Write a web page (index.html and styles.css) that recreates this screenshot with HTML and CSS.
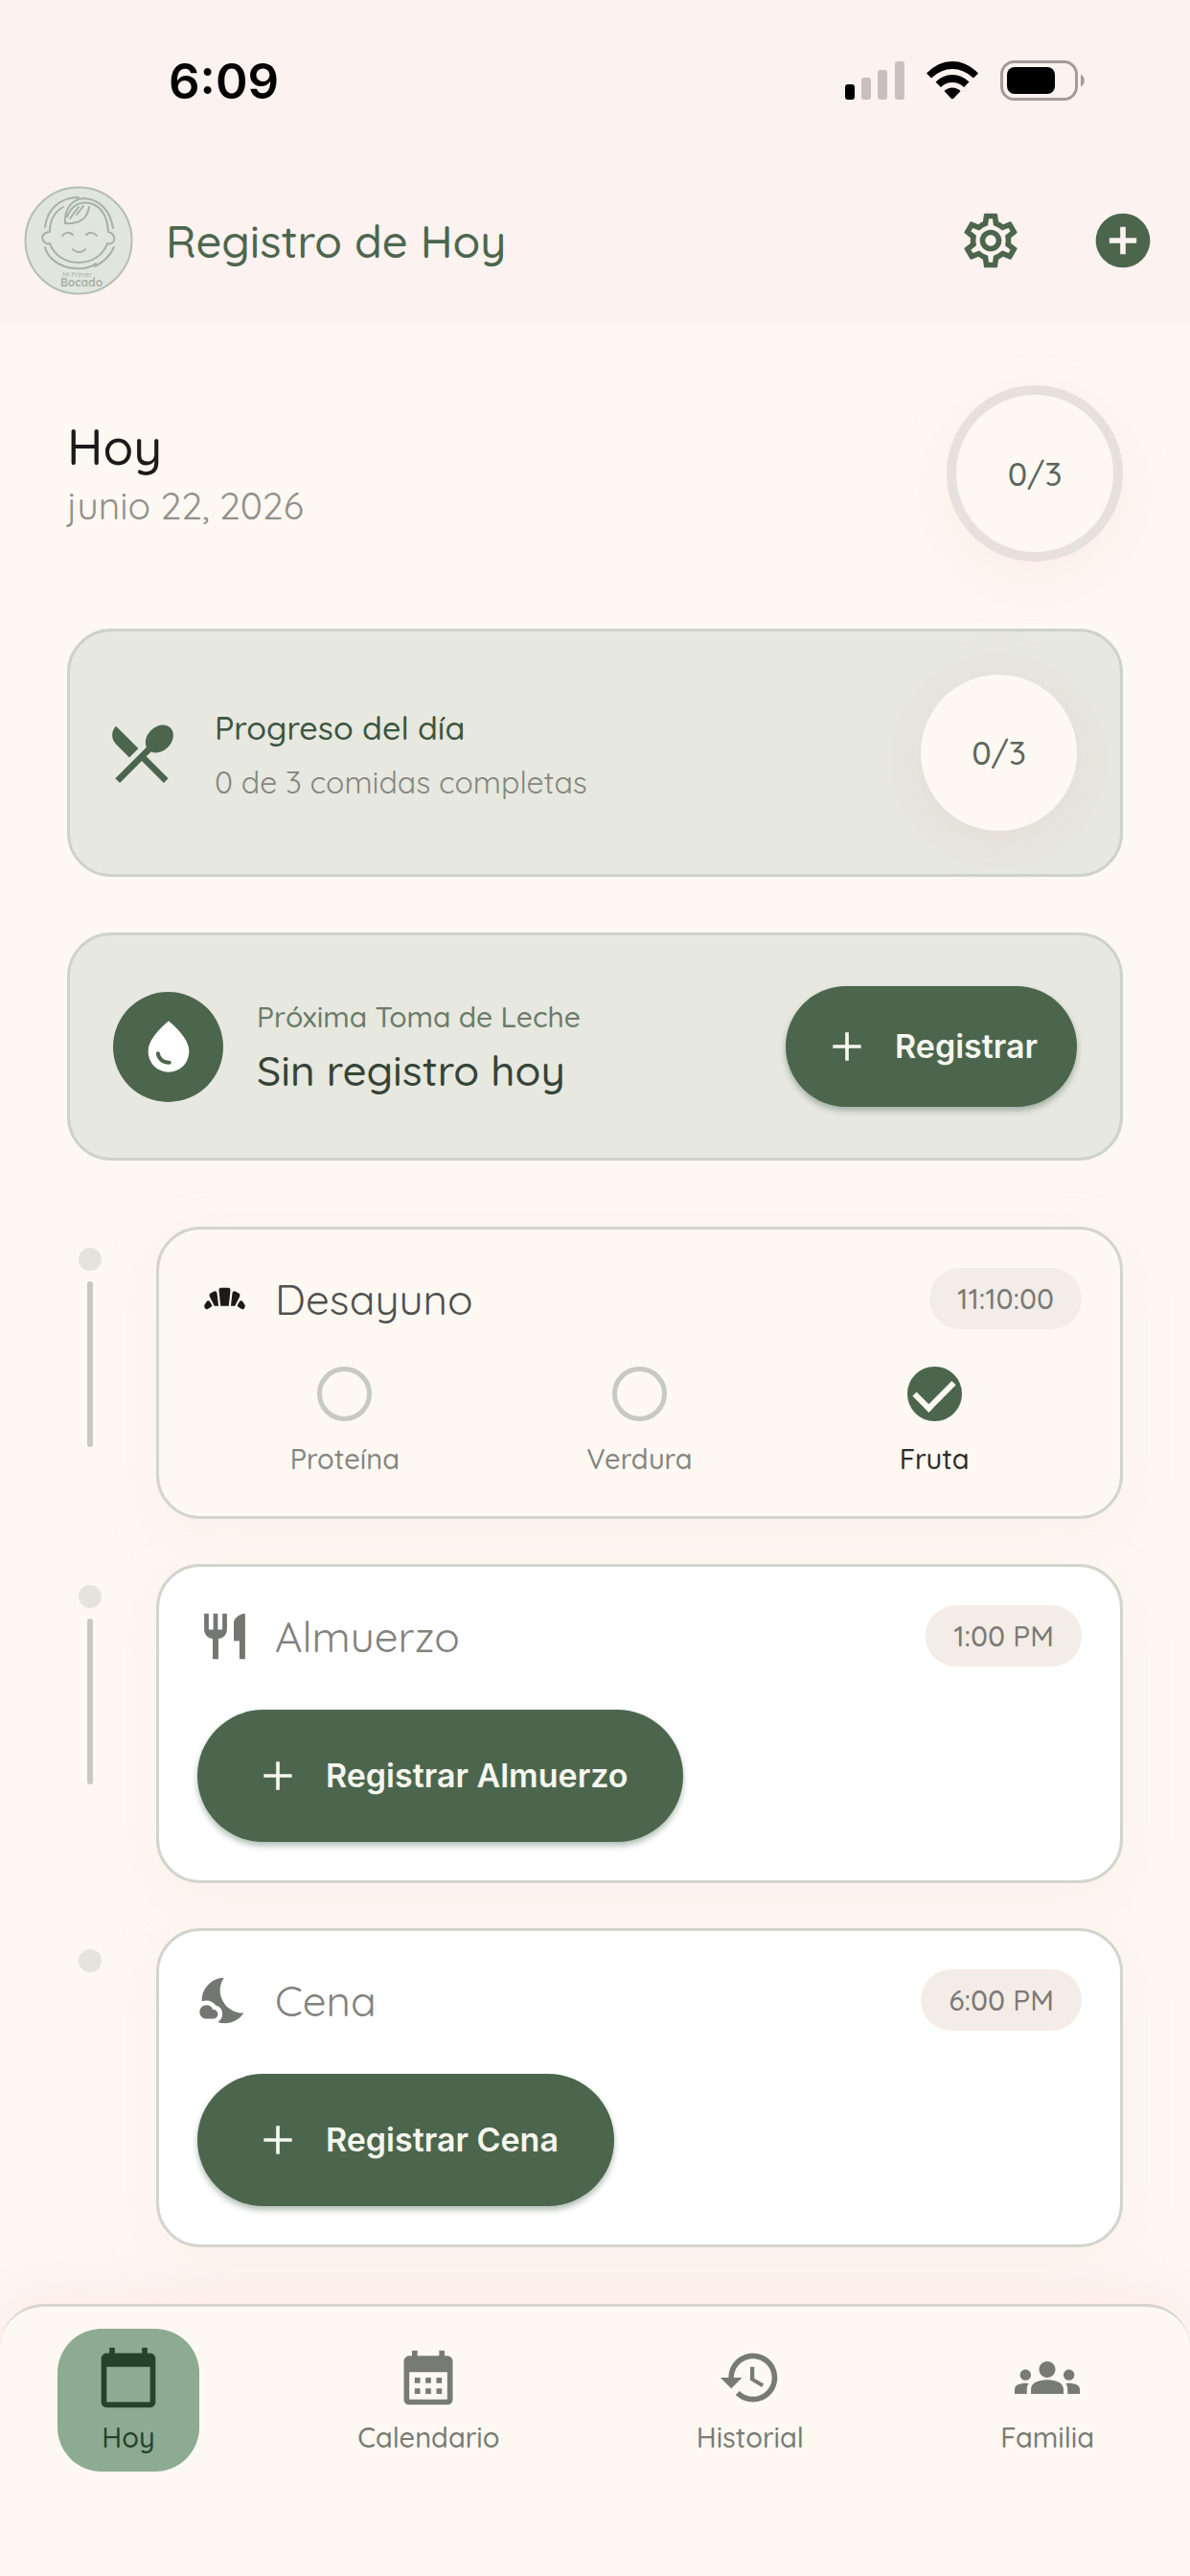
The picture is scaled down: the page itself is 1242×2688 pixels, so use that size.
FILE: index.html
```html
<!DOCTYPE html>
<html lang="es">
<head>
    <meta charset="UTF-8">
    <meta name="viewport" content="width=device-width, initial-scale=1.0">
    <title>Registro de Hoy</title>
    <link rel="stylesheet" href="styles.css">
</head>
<body>
    <header class="top">
        <div class="status-bar">
            <span class="clock">6:09</span>
            <div class="status-icons">
                <svg class="signal" viewBox="0 0 62 40">
                    <rect x="0" y="24" width="10" height="16" rx="3" fill="#000"/>
                    <rect x="17" y="17" width="10" height="23" rx="3" fill="#c9bfbe"/>
                    <rect x="34" y="9" width="10" height="31" rx="3" fill="#c9bfbe"/>
                    <rect x="52" y="0" width="10" height="40" rx="3" fill="#c9bfbe"/>
                </svg>
                <svg class="wifi" viewBox="0 0 54 40">
                    <path d="M0 12.500Q12 0 27 0T54 12.500L49 17.500Q39 8 27 8T5 17.500z"/>
                    <path d="M9.500 21.500Q17 14 27 14T44.500 21.500L39 27Q34 22 27 22T15 27z"/>
                    <path d="M18.500 31Q22 27.500 27 27.500T35.500 31L28.500 38.500Q27 40 25.500 38.500z"/>
                </svg>
                <svg class="battery" viewBox="0 0 90 42">
                    <rect x="1.500" y="1.500" width="78" height="39" rx="13" fill="none" stroke="#a39a99" stroke-width="3"/>
                    <rect x="7" y="7" width="50" height="28" rx="8"/>
                    <path d="M84 14.500a7.500 7.500 0 0 1 0 13z" fill="#a39a99"/>
                </svg>
            </div>
        </div>

        <div class="app-bar">
            <svg class="logo" viewBox="0 0 114 114">
                <circle cx="57" cy="57" r="55.500" fill="#e1e6dd" stroke="#b4beb3" stroke-width="2"/>
                <g fill="none" stroke="#a5b1a6" stroke-width="2" stroke-linecap="round">
                    <path d="M26 48c-6 1-8 5-6 9 2 3 4 4 7 3 4 12 16 20 30 20s26-8 30-20c3 1 6 0 7-3 1-4-1-8-6-9"/>
                    <path d="M22 43c2-18 15-31 35-31M27 48c0-13 5-21 14-26M43 39c-1-14 6-24 18-26 18 0 29 13 32 31M45 32c5-12 13-16 24-14 11 3 18 13 19 30"/>
                    <path d="M43 39c12 1 23-3 25-17M48 34l9-12M55 30l7-9"/>
                    <path d="M40 52c3-4 8-4 11-1M65 51c3-3 8-3 11 1M51 66c3 4 10 4 13 0"/>
                    <path d="M22 64c2 10 14 21 31 22 11 1 19-2 22-5M94 64c-4 9-10 15-20 20"/>
                </g>
                <text class="logo-small" x="40" y="95">Mi Primer</text>
                <text class="logo-name" x="38" y="105">Bocado</text>
            </svg>
            <h1 class="app-title">Registro de Hoy</h1>
            <button class="icon-btn" type="button" aria-label="Ajustes">
                <svg class="icon" viewBox="0 0 24 24"><path d="M19.430 12.980c.04-.32.07-.64.07-.98s-.03-.66-.07-.98l2.110-1.650c.19-.15.24-.42.12-.64l-2-3.460c-.09-.16-.26-.25-.44-.25-.06 0-.12.01-.17.03l-2.490 1c-.52-.4-1.080-.73-1.690-.98l-.38-2.650C14.460 2.180 14.250 2 14 2h-4c-.25 0-.46.18-.49.42l-.38 2.650c-.61.25-1.170.59-1.690.98l-2.490-1c-.06-.02-.12-.03-.18-.03-.17 0-.34.09-.43.25l-2 3.460c-.13.22-.07.49.12.64l2.110 1.650c-.04.32-.07.65-.07.98s.03.66.07.98l-2.110 1.650c-.19.15-.24.42-.12.64l2 3.460c.09.16.26.25.44.25.06 0 .12-.01.17-.03l2.490-1c.52.4 1.080.73 1.690.98l.38 2.650c.03.24.24.42.49.42h4c.25 0 .46-.18.49-.42l.38-2.650c.61-.25 1.170-.59 1.690-.98l2.490 1c.06.02.12.03.18.03.17 0 .34-.09.43-.25l2-3.460c.12-.22.07-.49-.12-.64l-2.110-1.650zm-1.980-1.710c.04.31.05.52.05.73 0 .21-.02.43-.05.73l-.14 1.130.89.7 1.080.84-.7 1.210-1.270-.51-1.040-.42-.9.68c-.43.32-.84.56-1.250.73l-1.060.43-.16 1.130-.2 1.350h-1.400l-.19-1.350-.16-1.130-1.060-.43c-.43-.18-.83-.41-1.230-.71l-.91-.7-1.060.43-1.270.51-.7-1.210 1.080-.84.89-.7-.14-1.130c-.03-.31-.05-.54-.05-.74s.02-.43.05-.73l.14-1.130-.89-.7-1.080-.84.7-1.210 1.270.51 1.040.42.9-.68c.43-.32.84-.56 1.250-.73l1.060-.43.16-1.130.2-1.350h1.390l.19 1.350.16 1.130 1.060.43c.43.18.83.41 1.230.71l.91.7 1.060-.43 1.270-.51.7 1.210-1.070.85-.89.7.14 1.130zM12 8c-2.210 0-4 1.790-4 4s1.790 4 4 4 4-1.790 4-4-1.790-4-4-4zm0 6c-1.100 0-2-.9-2-2s.9-2 2-2 2 .9 2 2-.9 2-2 2z"/></svg>
            </button>
            <button class="icon-btn" type="button" aria-label="Agregar">
                <svg class="icon" viewBox="0 0 24 24"><circle cx="12" cy="12" r="10"/><path d="M7 12h10M12 7v10" stroke="#fcf2ef" stroke-width="2"/></svg>
            </button>
        </div>
    </header>

    <main class="content">
        <section class="day">
            <div class="day-text">
                <h2 class="day-title">Hoy</h2>
                <p class="day-date">junio 22, 2026</p>
            </div>
            <div class="ring ring-outlined">0/3</div>
        </section>

        <section class="card progress">
            <svg class="progress-icon" viewBox="0 0 24 24"><path d="M8.100 13.340l2.830-2.830L3.910 3.500c-1.560 1.560-1.560 4.090 0 5.660l4.190 4.180zm6.780-1.810c1.530.71 3.680.21 5.270-1.380 1.910-1.910 2.280-4.650.81-6.120-1.460-1.460-4.200-1.100-6.120.81-1.590 1.590-2.090 3.740-1.380 5.270L3.700 19.870l1.410 1.410L12 14.410l6.880 6.880 1.410-1.410L13.410 13l1.470-1.470z"/></svg>
            <div class="card-text">
                <h3 class="progress-title">Progreso del día</h3>
                <p class="progress-sub">0 de 3 comidas completas</p>
            </div>
            <div class="ring">0/3</div>
        </section>

        <section class="card milk">
            <div class="milk-icon">
                <svg viewBox="0 0 24 24"><path d="M12 2c-5.330 4.550-8 8.480-8 11.800 0 4.980 3.800 8.200 8 8.200s8-3.220 8-8.200c0-3.320-2.670-7.250-8-11.800zM7.830 14c.37 0 .67.26.74.62.41 2.220 2.280 2.980 3.640 2.870.43-.02.79.32.79.75 0 .4-.32.73-.72.75-2.130.13-4.620-1.090-5.190-4.120-.08-.45.28-.87.74-.87z"/></svg>
            </div>
            <div class="card-text">
                <p class="milk-label">Próxima Toma de Leche</p>
                <h3 class="milk-title">Sin registro hoy</h3>
            </div>
            <button class="btn btn-small" type="button">
                <svg class="plus" viewBox="0 0 24 24"><path d="M4 12h16M12 4v16"/></svg>
                Registrar
            </button>
        </section>

        <section class="timeline">
            <div class="rail"><span class="dot"></span><span class="line"></span></div>
            <article class="meal meal-done">
                <div class="meal-head">
                    <svg class="meal-icon" viewBox="0 0 24 24"><path d="M19.280 16.340c-1.210-.89-1.820-1.340-1.820-1.340s.32-.59.96-1.780c.38-.59 1.220-.59 1.600 0l.81 1.260c.19.3.21.68.06 1l-.22.47c-.25.52-.91.7-1.390.39zm-14.560 0c-.48.31-1.140.13-1.390-.38l-.22-.47c-.15-.33-.13-.7.06-1l.81-1.260c.38-.59 1.220-.59 1.600 0 .65 1.180.97 1.770.97 1.770s-.62.45-1.830 1.340zm10.640-6.970c.09-.68.73-1.060 1.270-.75l1.590.9c.46.26.63.91.36 1.410L16.500 15h-1.800l.66-5.630zm-6.730 0L9.300 15H7.500l-2.090-4.080c-.27-.5-.1-1.150.36-1.410l1.590-.9c.53-.3 1.180.08 1.270.76zM13.800 15h-3.600l-.74-6.880c-.07-.59.35-1.120.88-1.120h3.300c.54 0 .95.53.88 1.120L13.800 15z"/></svg>
                    <h3 class="meal-title">Desayuno</h3>
                    <span class="time">11:10:00</span>
                </div>
                <div class="checks">
                    <label class="check"><input type="checkbox"><span>Proteína</span></label>
                    <label class="check"><input type="checkbox"><span>Verdura</span></label>
                    <label class="check"><input type="checkbox" checked><span>Fruta</span></label>
                </div>
            </article>

            <div class="rail"><span class="dot"></span><span class="line"></span></div>
            <article class="meal">
                <div class="meal-head">
                    <svg class="meal-icon" viewBox="0 0 24 24"><path d="M11 9H9V2H7v7H5V2H3v7c0 2.120 1.660 3.840 3.750 3.970V22h2.500v-9.030C11.340 12.840 13 11.120 13 9V2h-2v7zm5-3v8h2.500v8H21V2c-2.760 0-5 2.240-5 4z"/></svg>
                    <h3 class="meal-title">Almuerzo</h3>
                    <span class="time">1:00 PM</span>
                </div>
                <button class="btn" type="button">
                    <svg class="plus" viewBox="0 0 24 24"><path d="M4 12h16M12 4v16"/></svg>
                    Registrar Almuerzo
                </button>
            </article>

            <div class="rail"><span class="dot"></span></div>
            <article class="meal">
                <div class="meal-head">
                    <svg class="meal-icon" viewBox="0 0 24 24"><path d="M11.100 12.080c-2.330-4.510-.5-8.480.53-10.070C6.270 2.200 1.980 6.590 1.980 12c0 .14.02.28.02.42.62-.27 1.290-.42 2-.42 1.660 0 3.180.83 4.100 2.150A4.010 4.010 0 0 1 11 18c0 1.520-.87 2.830-2.120 3.510.98.32 2.030.5 3.110.5 3.500 0 6.580-1.800 8.370-4.520-2.360.23-6.980-.97-9.260-5.410zM7 16h-.18C6.400 14.840 5.300 14 4 14c-1.660 0-3 1.340-3 3s1.340 3 3 3h3c1.100 0 2-.9 2-2s-.9-2-2-2z"/></svg>
                    <h3 class="meal-title">Cena</h3>
                    <span class="time">6:00 PM</span>
                </div>
                <button class="btn" type="button">
                    <svg class="plus" viewBox="0 0 24 24"><path d="M4 12h16M12 4v16"/></svg>
                    Registrar Cena
                </button>
            </article>
        </section>
    </main>

    <nav class="tabs">
        <a href="#hoy" class="tab active">
            <svg class="icon" viewBox="0 0 24 24"><path d="M20 3h-1V1h-2v2H7V1H5v2H4c-1.100 0-2 .9-2 2v16c0 1.100.9 2 2 2h16c1.100 0 2-.9 2-2V5c0-1.100-.9-2-2-2zm0 18H4V8h16v13z"/></svg>
            Hoy
        </a>
        <a href="#calendario" class="tab">
            <svg class="icon" viewBox="0 0 24 24"><path d="M19 4h-1V2h-2v2H8V2H6v2H5c-1.110 0-1.990.9-1.990 2L3 20c0 1.100.89 2 2 2h14c1.100 0 2-.9 2-2V6c0-1.100-.9-2-2-2zm0 16H5V10h14v10zM9 14H7v-2h2v2zm4 0h-2v-2h2v2zm4 0h-2v-2h2v2zm-8 4H7v-2h2v2zm4 0h-2v-2h2v2zm4 0h-2v-2h2v2z"/></svg>
            Calendario
        </a>
        <a href="#historial" class="tab">
            <svg class="icon" viewBox="0 0 24 24"><path d="M13 3c-4.970 0-9 4.030-9 9H1l3.890 3.890.07.14L9 12H6c0-3.870 3.130-7 7-7s7 3.130 7 7-3.130 7-7 7c-1.930 0-3.680-.79-4.940-2.060l-1.420 1.420C8.270 19.990 10.510 21 13 21c4.970 0 9-4.030 9-9s-4.030-9-9-9zm-1 5v5l4.280 2.540.72-1.210-3.500-2.080V8H12z"/></svg>
            Historial
        </a>
        <a href="#familia" class="tab">
            <svg class="icon" viewBox="0 0 24 24"><path d="M12 12.750c1.630 0 3.070.39 4.240.9 1.080.48 1.760 1.560 1.760 2.730V18H6v-1.610c0-1.180.68-2.260 1.760-2.730 1.170-.52 2.610-.91 4.240-.91zM4 13c1.100 0 2-.9 2-2s-.9-2-2-2-2 .9-2 2 .9 2 2 2zm1.130 1.100c-.37-.06-.74-.1-1.130-.1-.99 0-1.930.21-2.780.58C.48 14.900 0 15.620 0 16.430V18h4.500v-1.610c0-.83.23-1.610.63-2.290zM20 13c1.100 0 2-.9 2-2s-.9-2-2-2-2 .9-2 2 .9 2 2 2zm4 3.430c0-.81-.48-1.530-1.220-1.850-.85-.37-1.790-.58-2.780-.58-.39 0-.76.04-1.130.1.4.68.63 1.460.63 2.290V18H24v-1.570zM12 6c1.660 0 3 1.340 3 3s-1.340 3-3 3-3-1.340-3-3 1.340-3 3-3z"/></svg>
            Familia
        </a>
    </nav>
</body>
</html>
```
FILE: styles.css
```css
* {
    margin: 0;
    padding: 0;
    box-sizing: border-box;
}

body {
    font-family: Quicksand, Lato, 'Open Sans', sans-serif;
    font-weight: 500;
    background: #fdf8f2;
    color: #1c1b1a;
    min-height: 100vh;
    display: flex;
    flex-direction: column;
}

svg {
    display: block;
    flex: none;
    fill: currentColor;
}

button {
    font-family: inherit;
    border: none;
    cursor: pointer;
}

h1, h2, h3 {
    font-weight: 500;
}

/* Header */
.top {
    background: #fcf2ef;
    padding-bottom: 29px;
}

.status-bar {
    display: flex;
    align-items: center;
    justify-content: space-between;
    height: 168px;
    padding: 0 108px 0 176px;
    color: #000;
}

.clock {
    font-family: Inter, sans-serif;
    font-size: 51px;
    font-weight: 600;
}

.status-icons {
    display: flex;
    align-items: center;
    gap: 23px;
}

.signal {
    width: 62px;
    height: 40px;
}

.wifi {
    width: 54px;
    height: 40px;
}

.battery {
    width: 90px;
    height: 42px;
}

.app-bar {
    display: flex;
    align-items: center;
    height: 114px;
    margin-top: 26px;
    padding: 0 36px 0 25px;
    color: #4c664e;
}

.logo {
    width: 114px;
    height: 114px;
}

.logo-small {
    font-size: 7px;
    fill: #a5b1a6;
}

.logo-name {
    font-size: 12px;
    font-weight: 700;
    fill: #a5b1a6;
}

.app-title {
    flex: 1;
    margin-left: 34px;
    font-size: 47px;
}

.icon-btn {
    background: none;
    color: inherit;
    margin-left: 70px;
}

.icon {
    width: 68px;
    height: 68px;
}

/* Content */
.content {
    padding: 65px 70px 59px;
}

.day {
    display: flex;
    align-items: center;
    justify-content: space-between;
    margin-bottom: 70px;
}

.day-text {
    padding-top: 4px;
}

.day-title {
    font-size: 52px;
    line-height: 64px;
}

.day-date {
    font-size: 39px;
    font-weight: 400;
    line-height: 60px;
    color: #92908b;
}

.ring {
    display: flex;
    align-items: center;
    justify-content: center;
    flex: none;
    width: 163px;
    height: 163px;
    border-radius: 50%;
    background: #fdf8f2;
    color: #5d675c;
    font-size: 34px;
    box-shadow: 0 8px 44px rgba(222, 200, 195, 0.4);
}

.ring-outlined {
    width: 184px;
    height: 184px;
    border: 10px solid #e6e1dd;
    box-shadow: 0 20px 50px rgba(255, 220, 215, 0.35);
}

.card {
    display: flex;
    align-items: center;
    padding: 45px;
    border: 3px solid #cfd2c8;
    border-radius: 46px;
    background: #e7e8df;
    margin-bottom: 58px;
}

.card-text {
    flex: 1;
}

.progress .card-text {
    padding-top: 4px;
}

.progress-icon {
    width: 80px;
    height: 80px;
    margin: 0 36px 0 -10px;
    color: #4c664e;
}

.progress-title {
    font-size: 34px;
    line-height: 56px;
    color: #3c5541;
}

.progress-sub {
    font-size: 32px;
    font-weight: 400;
    line-height: 56px;
    color: #85867f;
}

.milk {
    padding: 53px 45px;
    margin-bottom: 69px;
}

.milk .card-text {
    padding-bottom: 6px;
}

.milk-icon {
    display: flex;
    align-items: center;
    justify-content: center;
    width: 115px;
    height: 115px;
    border-radius: 50%;
    background: #4c664e;
    color: #fff;
    margin-right: 35px;
}

.milk-icon svg {
    width: 64px;
    height: 64px;
}

.milk-label {
    font-size: 30px;
    line-height: 56px;
    color: #6b7b69;
}

.milk-title {
    font-size: 44px;
    line-height: 56px;
    color: #354438;
}

.btn {
    display: inline-flex;
    align-items: center;
    gap: 28px;
    padding: 51px 58px 51px 62px;
    border-radius: 69px;
    background: #4c664e;
    color: #f6f7ee;
    font-family: Inter, sans-serif;
    font-size: 34px;
    font-weight: 600;
    line-height: 36px;
    box-shadow: 0 4px 6px rgba(60, 90, 70, 0.4);
}

.btn-small {
    padding: 45px 41px 45px 42px;
    border-radius: 64px;
}

.plus {
    width: 44px;
    height: 44px;
    margin: -4px 0;
    fill: none;
    stroke: currentColor;
    stroke-width: 2;
}

/* Meals */
.timeline {
    display: grid;
    grid-template-columns: 47px 1fr;
    column-gap: 46px;
    row-gap: 47px;
}

.rail {
    display: flex;
    flex-direction: column;
    align-items: center;
    gap: 11px;
    padding-top: 22px;
}

.dot {
    width: 24px;
    height: 24px;
    border-radius: 50%;
    background: #e6e2dd;
}

.line {
    width: 6px;
    height: 173px;
    border-radius: 3px;
    background: #c9c8c2;
}

.meal {
    border: 3px solid #d3d4cd;
    border-radius: 46px;
    background: #fff;
    padding: 40px;
    color: #747672;
    box-shadow: 0 16px 50px rgba(255, 225, 220, 0.35);
}

.meal-head {
    display: flex;
    align-items: center;
    height: 64px;
    margin-bottom: 45px;
}

.meal-icon {
    width: 57px;
    height: 57px;
}

.meal-title {
    flex: 1;
    margin-left: 24px;
    font-size: 44px;
    font-weight: 400;
    color: #82827f;
}

.time {
    padding: 12px 29px;
    border-radius: 32px;
    background: #f4ece6;
    color: #7b7a76;
    font-size: 30px;
    line-height: 40px;
}

.meal-done {
    background: #fdf8f2;
}

.meal-done .meal-head {
    margin-bottom: 39px;
}

.meal-done .meal-icon {
    color: #1c1b1a;
}

.meal-done .meal-title {
    color: #50504d;
}

.meal-done .time {
    background: #f2ede8;
}

.checks {
    display: grid;
    grid-template-columns: repeat(3, 1fr);
}

.check {
    display: flex;
    flex-direction: column;
    align-items: center;
    gap: 19px;
    font-size: 29px;
    line-height: 40px;
    color: #858581;
}

.check input {
    appearance: none;
    display: grid;
    place-items: center;
    width: 57px;
    height: 57px;
    border: 5px solid #c8c9c3;
    border-radius: 50%;
}

.check input:checked {
    border-color: #4c664e;
    background: #4c664e;
}

.check input:checked::after {
    content: "";
    width: 18px;
    height: 34px;
    margin-top: -8px;
    border: solid #fdf8f2;
    border-width: 0 6px 6px 0;
    transform: rotate(45deg);
}

.check input:checked + span {
    color: #2c2c2a;
}

/* Bottom tabs */
.tabs {
    display: flex;
    align-items: flex-start;
    justify-content: space-between;
    margin-top: auto;
    padding: 23px 60px 110px;
    border-top: 3px solid #d8d5cd;
    border-radius: 46px 46px 0 0;
    background: #fdf8f2;
    box-shadow: 0 -12px 50px rgba(255, 225, 220, 0.6);
}

.tab {
    display: flex;
    flex-direction: column;
    align-items: center;
    padding: 17px 40px 16px;
    border-radius: 46px;
    font-size: 29px;
    line-height: 40px;
    gap: 8px;
    color: #777b74;
    text-decoration: none;
}

.tab.active {
    background: #8dab93;
    color: #25432b;
}
```
